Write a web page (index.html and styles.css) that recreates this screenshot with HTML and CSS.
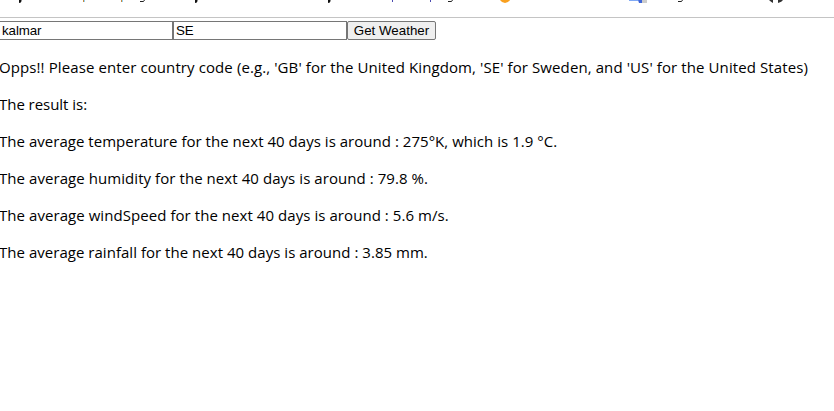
FILE: index.html
```html
<!DOCTYPE html>
<html lang="en">
<head>
<meta charset="utf-8">
<title>Weather</title>
<link rel="stylesheet" href="styles.css">
</head>
<body>
<header class="bookmarks">
<svg width="834" height="4" viewBox="0 0 834 4" aria-hidden="true">
<path d="M19 0h2.500v1q0 2-2.500 2zM195 0h2.500v1q0 2-2.500 2zM328 0h2.500v1q0 2-2.500 2z" fill="#111"/>
<path d="M83.500 0v2M121.500 0v2" stroke="#c98a3c"/>
<path d="M84.500 0v2M122.500 0v2" stroke="#8fd0f5"/>
<path d="M392.500 0v2M430.500 0v2" stroke="#4a4ab0"/>
<path d="M140 1.500h3.500l1-1.500M448 1.500h3.500l1-1.500M678 1.500h3.500l1-1.500" fill="none" stroke="#222"/>
<path d="M500 0h10q-2 3-5 3t-5-3z" fill="#f9a01f"/>
<path d="M629 0h9v1h-9z" fill="#7fa9f5"/>
<path d="M638 0h4v3h-3z" fill="#3f66d8"/>
<path d="M642 0h5v3h-5z" fill="#ccc"/>
<path d="M769 0q2 2 4 3v-3zM778 0h5q-1 2-5 3z" fill="#333"/>
</svg>
</header>
<main>
<form class="search">
<input type="text" value="kalmar" aria-label="City">
<input type="text" value="SE" aria-label="Country">
<button type="button">Get Weather</button>
</form>
<p class="hint">Opps!! Please enter country code (e.g., 'GB' for the United Kingdom, 'SE' for Sweden, and 'US' for the United States)</p>
<p class="result">The result is:</p>
<p class="temperature">The average temperature for the next 40 days is around : 275°K, which is 1.9 °C.</p>
<p class="humidity">The average humidity for the next 40 days is around : 79.8 %.</p>
<p class="wind">The average windSpeed for the next 40 days is around : 5.6 m/s.</p>
<p class="rain">The average rainfall for the next 40 days is around : 3.85 mm.</p>
</main>
</body>
</html>
```
FILE: styles.css
```css
body {
  margin: 0;
  background: #fff;
  color: #000;
  font: 15px/21px "Open Sans", sans-serif;
  overflow: hidden;
}
.bookmarks {
  box-sizing: border-box;
  height: 18px;
  border-bottom: 1px solid #c4c4c4;
}
.bookmarks svg { display: block; }
.search {
  display: flex;
  padding-top: 3px;
  height: 19px;
  margin-left: -1px;
}
input, button {
  box-sizing: border-box;
  margin: 0;
  height: 19px;
  border: 1px solid #767676;
  font: 13.333px "Liberation Sans", sans-serif;
  color: #000;
}
input {
  width: 174px;
  padding: 1px 2px;
  background: #fff;
  letter-spacing: -0.1px;
}
button {
  width: 89px;
  padding: 0;
  border-radius: 2px;
  background: #efefef;
}
p {
  margin: 0 0 16px -1px;
  white-space: nowrap;
}
.hint { margin-top: 17px; letter-spacing: 0.098px; }
.result { letter-spacing: -0.04px; }
.temperature { letter-spacing: 0.03px; }
.humidity { letter-spacing: 0.065px; }
.wind { letter-spacing: 0.06px; }
.rain { letter-spacing: 0.03px; }
```
